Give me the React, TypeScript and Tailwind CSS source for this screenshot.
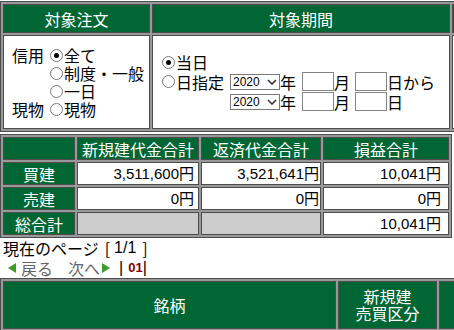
const head = 'flex items-center justify-center border border-[#4d4d4d] bg-[#006633] text-white';
const white = 'border border-[#4d4d4d] bg-white';
const frame = 'w-max shrink-0 border border-[#4d4d4d] bg-[#999999] p-[2px] flex flex-col gap-[2px]';
const num = "flex items-center justify-end text-[15px] font-['Liberation_Sans','Noto_Sans_CJK_JP',sans-serif]";

function Radio({ checked = false }: { checked?: boolean }) {
  return (
    <span className="w-[13px] h-[13px] shrink-0 rounded-full border border-[#7a7a7a] bg-white flex items-center justify-center">
      {checked && <span className="w-[5px] h-[5px] rounded-full bg-black" />}
    </span>
  );
}

function RadioLabel({ checked = false, label }: { checked?: boolean; label: string }) {
  return (
    <span className="flex items-center gap-[1px]">
      <Radio checked={checked} />
      <span>{label}</span>
    </span>
  );
}

function YearSelect() {
  return (
    <div className="w-[50px] h-[16px] shrink-0 border border-[#7a7a7a] bg-white flex items-center justify-between pl-[2px] pr-[2px]">
      <span className="text-[12px] leading-[14px] font-['Liberation_Sans',sans-serif]">2020</span>
      <svg width="10" height="6" viewBox="0 0 10 6">
        <polyline points="1,1 5,5 9,1" fill="none" stroke="#333" strokeWidth="1.6" />
      </svg>
    </div>
  );
}

function DateInput() {
  return <div className="w-[32px] h-[19px] shrink-0 border border-[#858585] bg-white" />;
}

function DateRow({ lead, tail }: { lead: React.ReactNode; tail: string }) {
  return (
    <div className="h-[20px] flex items-center">
      <div className="w-[68px] flex items-center">{lead}</div>
      <YearSelect />
      <span>年</span>
      <span className="ml-[6px]"><DateInput /></span>
      <span>月</span>
      <span className="ml-[5px]"><DateInput /></span>
      <span>{tail}</span>
    </div>
  );
}

const totals = [
  { label: '買建', open: '3,511,600円', close: '3,521,641円', pl: '10,041円' },
  { label: '売建', open: '0円', close: '0円', pl: '0円' },
];

export default function App() {
  return (
    <div className="w-[454px] h-[330px] overflow-hidden bg-white text-black text-[16px] leading-[18px] font-['Noto_Sans_CJK_JP',sans-serif]">
      {/* search conditions */}
      <div className={`mt-[1px] ${frame}`}>
        <div className="flex gap-[2px]">
          <div className={`${head} w-[147px] h-[29px]`}>対象注文</div>
          <div className={`${head} w-[298px] h-[29px]`}>対象期間</div>
          <div className={`${head} w-[80px] h-[29px]`} />
        </div>
        <div className="flex gap-[2px]">
          <div className={`${white} w-[147px] h-[94px] flex items-center pl-[8px]`}>
            <div className="grid grid-cols-[38px_auto]">
              <span>信用</span>
              <RadioLabel checked label="全て" />
              <span />
              <RadioLabel label="制度・一般" />
              <span />
              <RadioLabel label="一日" />
              <span>現物</span>
              <RadioLabel label="現物" />
            </div>
          </div>
          <div className={`${white} w-[298px] h-[94px] flex flex-col justify-center pl-[9px]`}>
            <div className="h-[19px] flex items-center">
              <RadioLabel checked label="当日" />
            </div>
            <DateRow lead={<RadioLabel label="日指定" />} tail="日から" />
            <DateRow lead={null} tail="日" />
          </div>
          <div className={`${white} w-[80px] h-[94px]`} />
        </div>
      </div>

      {/* totals */}
      <div className={`mt-[2px] ${frame}`}>
        <div className="flex gap-[2px]">
          <div className={`${head} w-[72px] h-[23px]`} />
          <div className={`${head} w-[122px] h-[23px]`}>新規建代金合計</div>
          <div className={`${head} w-[120px] h-[23px]`}>返済代金合計</div>
          <div className={`${head} w-[126px] h-[23px]`}>損益合計</div>
        </div>
        {totals.map((row) => (
          <div key={row.label} className="flex gap-[2px]">
            <div className={`${head} w-[72px] h-[23px]`}>{row.label}</div>
            <div className={`${white} ${num} w-[122px] h-[23px] pr-[4px]`}>{row.open}</div>
            <div className={`${white} ${num} w-[120px] h-[23px] pr-[1px]`}>{row.close}</div>
            <div className={`${white} ${num} w-[126px] h-[23px] pr-[7px]`}>{row.pl}</div>
          </div>
        ))}
        <div className="flex gap-[2px]">
          <div className={`${head} w-[72px] h-[23px]`}>総合計</div>
          <div className="w-[122px] h-[23px] border border-[#4d4d4d] bg-[#cccccc]" />
          <div className="w-[120px] h-[23px] border border-[#4d4d4d] bg-[#cccccc]" />
          <div className={`${white} ${num} w-[126px] h-[23px] pr-[7px]`}>10,041円</div>
        </div>
      </div>

      {/* paging */}
      <div className="mt-[1px] h-[18px] pl-[3px] flex items-center whitespace-nowrap">
        <span>現在のページ</span>
        <span className="ml-[6px]">[</span>
        <span className="ml-[4px] font-['Liberation_Sans',sans-serif]">1/1</span>
        <span className="ml-[6px]">]</span>
      </div>
      <div className="h-[21px] flex items-center pl-[8px]">
        <svg width="8" height="10" viewBox="0 0 8 10" className="shrink-0">
          <polygon points="8,0 8,10 0,5" fill="#3f9a2c" />
        </svg>
        <span className="ml-[5px] text-[#666666]">戻る</span>
        <span className="ml-[15px] text-[#666666]">次へ</span>
        <svg width="8" height="10" viewBox="0 0 8 10" className="ml-[2px] shrink-0">
          <polygon points="0,0 0,10 8,5" fill="#3f9a2c" />
        </svg>
        <span className="ml-[9px] font-['Liberation_Sans',sans-serif]">|</span>
        <span className="ml-[5px] text-[13px] font-bold text-[#800000] font-['Liberation_Sans',sans-serif]">01</span>
        <span className="font-['Liberation_Sans',sans-serif]">|</span>
      </div>

      {/* detail list header */}
      <div className={frame}>
        <div className="flex gap-[2px]">
          <div className={`${head} w-[333px] h-[48px]`}>銘柄</div>
          <div className={`${head} w-[99px] h-[48px] flex-col leading-[17px]`}>
            <span>新規建</span>
            <span>売買区分</span>
          </div>
          <div className={`${head} w-[80px] h-[48px]`} />
        </div>
      </div>
    </div>
  );
}
